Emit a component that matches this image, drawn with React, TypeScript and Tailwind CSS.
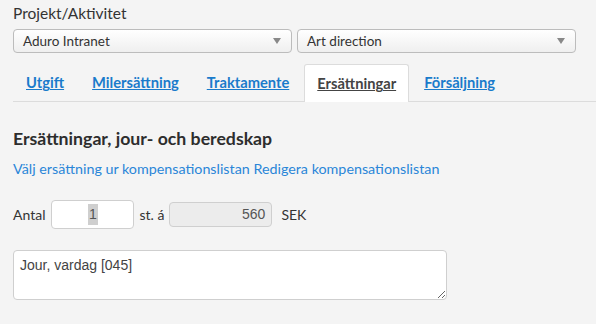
import React from "react";

const tabs = ["Utgift", "Milersättning", "Traktamente", "Ersättningar", "Försäljning"];

function FakeSelect({ label, className }: { label: string; className: string }) {
  return (
    <div
      className={`flex h-[24px] items-center justify-between rounded-[4px] border border-[#bcbcbc] bg-gradient-to-b from-white to-[#efefef] pl-[9px] pr-[8px] text-[13.5px] text-[#333] ${className}`}
    >
      <span>{label}</span>
      <svg width="8" height="6" viewBox="0 0 8 6" className="mr-[2px]">
        <path d="M0 0h8L4 6z" fill="#888" />
      </svg>
    </div>
  );
}

export default function App() {
  const active = "Ersättningar";
  return (
    <div className="h-[324px] w-[596px] overflow-hidden bg-[#f4f4f4] font-['Lato',sans-serif] text-[#333]">
      <div className="pl-[13px] pt-[3px] text-[15.5px] leading-[20px]">Projekt/Aktivitet</div>

      <div className="mt-[6px] flex gap-[5px] pl-[13px]">
        <FakeSelect label="Aduro Intranet" className="w-[279px]" />
        <FakeSelect label="Art direction" className="w-[279px]" />
      </div>

      {/* Tabs sit on a thin rule; the active one covers it. */}
      <div className="ml-[13px] mt-[11px] flex gap-[2px] border-b border-[#dcdcdc]">
        {tabs.map((t) =>
          t === active ? (
            <div
              key={t}
              className="-mb-px flex h-[38px] items-center rounded-t-[3px] border border-b-0 border-[#dcdcdc] bg-white px-[12px] text-[14.7px] font-bold text-[#444] underline"
            >
              {t}
            </div>
          ) : (
            <a
              key={t}
              href="#"
              className="flex h-[37px] items-center px-[13px] text-[14.7px] font-bold text-[#1a7bcb] underline"
            >
              {t}
            </a>
          )
        )}
      </div>

      <h2 className="mt-[26px] pl-[13px] text-[17.7px] font-bold leading-[22px] text-[#2d2d2d]">
        Ersättningar, jour- och beredskap
      </h2>
      <div className="mt-[10px] pl-[13px] text-[14.3px] leading-[18px] text-[#2a86d8]">
        <a href="#">Välj ersättning ur kompensationslistan</a>{" "}
        <a href="#">Redigera kompensationslistan</a>
      </div>

      <div className="mt-[22px] flex items-center pl-[13px] text-[14px]">
        <span>Antal</span>
        <div className="ml-[6px] flex h-[29px] w-[83px] items-center justify-center rounded-[4px] border border-[#cfcfcf] bg-white font-['Liberation_Sans',sans-serif] text-[14px] text-[#555]">
          <span className="bg-[#cfcfcf] px-[1px]">1</span>
        </div>
        <span className="ml-[5px]">st. á</span>
        <div className="ml-[5px] flex h-[25px] w-[103px] items-center justify-end rounded-[4px] border border-[#cfcfcf] bg-[#ececec] pr-[6px] font-['Liberation_Sans',sans-serif] text-[14px] text-[#555]">
          560
        </div>
        <span className="ml-[9px]">SEK</span>
      </div>

      <div className="ml-[13px] mt-[21px] h-[50px] w-[434px]">
        <textarea
          defaultValue="Jour, vardag [045]"
          className="h-full w-full rounded-[4px] border border-[#cfcfcf] bg-white px-[6px] py-[5px] font-['Liberation_Sans',sans-serif] text-[14px] leading-[18px] text-[#444] outline-none"
        />
      </div>
    </div>
  );
}
